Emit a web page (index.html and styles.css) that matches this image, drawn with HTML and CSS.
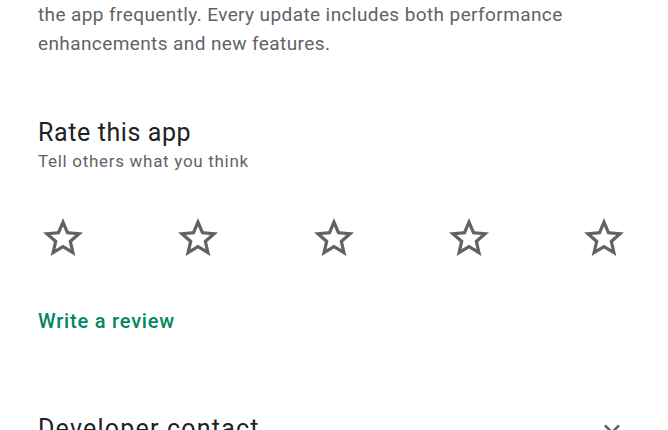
FILE: index.html
```html
<!DOCTYPE html>
<html lang="en">
<head>
    <meta charset="UTF-8">
    <meta name="viewport" content="width=device-width, initial-scale=1.0">
    <title>App details</title>
    <link rel="stylesheet" href="styles.css">
</head>
<body>

<div class="page">
    <!-- about this app (tail) -->
    <p class="about-text">
        the app frequently. Every update includes both performance enhancements and new features.
    </p>

    <!-- rating -->
    <section class="rate">
        <h2 class="section-title">Rate this app</h2>
        <p class="section-sub">Tell others what you think</p>

        <div class="stars">
            <svg class="star" viewBox="0 0 24 24"><path d="M22 9.24l-7.19-.62L12 2 9.19 8.63 2 9.24l5.46 4.73L5.82 21 12 17.27 18.18 21l-1.63-7.03L22 9.24zM12 15.4l-3.76 2.27 1-4.28-3.32-2.88 4.38-.38L12 6.1l1.71 4.04 4.38.38-3.32 2.88 1 4.28L12 15.4z"/></svg>
            <svg class="star" viewBox="0 0 24 24"><path d="M22 9.24l-7.19-.62L12 2 9.19 8.63 2 9.24l5.46 4.73L5.82 21 12 17.27 18.18 21l-1.63-7.03L22 9.24zM12 15.4l-3.76 2.27 1-4.28-3.32-2.88 4.38-.38L12 6.1l1.71 4.04 4.38.38-3.32 2.88 1 4.28L12 15.4z"/></svg>
            <svg class="star" viewBox="0 0 24 24"><path d="M22 9.24l-7.19-.62L12 2 9.19 8.63 2 9.24l5.46 4.73L5.82 21 12 17.27 18.18 21l-1.63-7.03L22 9.24zM12 15.4l-3.76 2.27 1-4.28-3.32-2.88 4.38-.38L12 6.1l1.71 4.04 4.38.38-3.32 2.88 1 4.28L12 15.4z"/></svg>
            <svg class="star" viewBox="0 0 24 24"><path d="M22 9.24l-7.19-.62L12 2 9.19 8.63 2 9.24l5.46 4.73L5.82 21 12 17.27 18.18 21l-1.63-7.03L22 9.24zM12 15.4l-3.76 2.27 1-4.28-3.32-2.88 4.38-.38L12 6.1l1.71 4.04 4.38.38-3.32 2.88 1 4.28L12 15.4z"/></svg>
            <svg class="star" viewBox="0 0 24 24"><path d="M22 9.24l-7.19-.62L12 2 9.19 8.63 2 9.24l5.46 4.73L5.82 21 12 17.27 18.18 21l-1.63-7.03L22 9.24zM12 15.4l-3.76 2.27 1-4.28-3.32-2.88 4.38-.38L12 6.1l1.71 4.04 4.38.38-3.32 2.88 1 4.28L12 15.4z"/></svg>
        </div>

        <a class="write-review" href="#">Write a review</a>
    </section>

    <!-- developer contact -->
    <section class="contact">
        <h2 class="section-title contact-title">Developer contact</h2>
        <svg class="chevron" viewBox="0 0 24 24"><path d="M16.59 8.59L12 13.17 7.41 8.59 6 10l6 6 6-6z"/></svg>
    </section>
</div>

</body>
</html>
```

FILE: styles.css
```css
body {
    margin: 0;
    background: #ffffff;
    font-family: Roboto, "Noto Sans", sans-serif;
    overflow: hidden;
}

.page {
    padding: 0 40px 0 38px;
}

/* 説明文の続き */
.about-text {
    margin: 0;
    font-size: 19px;
    line-height: 29px;
    color: #5f6368;
    letter-spacing: 0.4px;
}

.rate {
    margin-top: 60px;
}

.section-title {
    margin: 0;
    font-size: 25px;
    font-weight: 400;
    line-height: 30px;
    color: #202124;
    letter-spacing: 0.6px;
}

.contact-title {
    letter-spacing: 1.2px;
}

.section-sub {
    margin: 2px 0 0;
    font-size: 17px;
    line-height: 22px;
    color: #5f6368;
    letter-spacing: 0.7px;
}

.stars {
    display: flex;
    justify-content: space-between;
    margin-top: 42px;
    padding: 0 0 0 1px;
}

.star {
    width: 48px;
    height: 48px;
    fill: #5f6368;
}

.write-review {
    display: block;
    margin-top: 47px;
    font-size: 20px;
    font-weight: 500;
    line-height: 24px;
    color: #01875f;
    text-decoration: none;
    letter-spacing: 0.8px;
}

.contact {
    display: flex;
    justify-content: space-between;
    align-items: center;
    margin-top: 80px;
}

.chevron {
    width: 32px;
    height: 32px;
    fill: #5f6368;
}
```
